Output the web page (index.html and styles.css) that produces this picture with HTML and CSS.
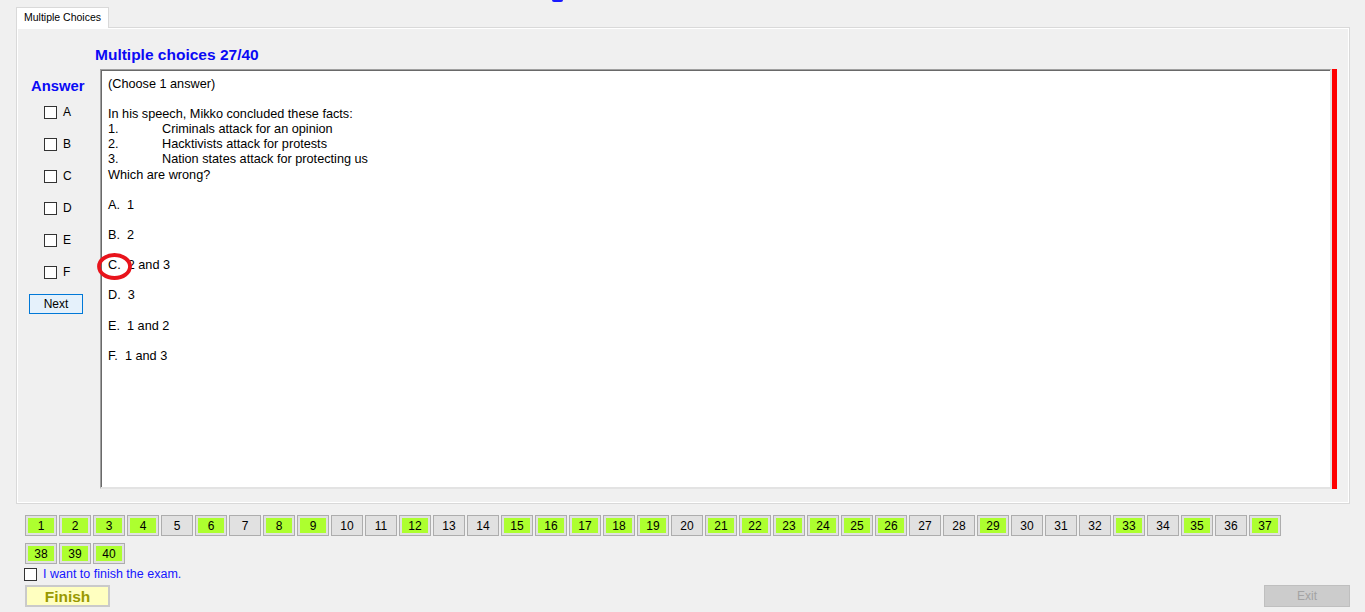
FILE: index.html
```html
<!DOCTYPE html>
<html>
<head>
<meta charset="utf-8">
<link rel="stylesheet" href="styles.css">
</head>
<body>
<div class="top-mark"></div>
<div class="tabs"><div class="tab">Multiple Choices</div></div>
<div class="page">
  <div class="title">Multiple choices 27/40</div>
  <div class="content">
    <div class="answer-col">
      <div class="answer-title">Answer</div>
      <label class="opt"><span class="cb"></span><span>A</span></label>
      <label class="opt"><span class="cb"></span><span>B</span></label>
      <label class="opt"><span class="cb"></span><span>C</span></label>
      <label class="opt"><span class="cb"></span><span>D</span></label>
      <label class="opt"><span class="cb"></span><span>E</span></label>
      <label class="opt"><span class="cb"></span><span>F</span></label>
      <button class="next">Next</button>
    </div>
    <div class="qbox">
      <div class="line">(Choose 1 answer)</div>
      <div class="line">&nbsp;</div>
      <div class="line">In his speech, Mikko concluded these facts:</div>
      <div class="line"><span class="num-tab">1.</span>Criminals attack for an opinion</div>
      <div class="line"><span class="num-tab">2.</span>Hacktivists attack for protests</div>
      <div class="line"><span class="num-tab">3.</span>Nation states attack for protecting us</div>
      <div class="line">Which are wrong?</div>
      <div class="line">&nbsp;</div>
      <div class="line">A.&nbsp; 1</div>
      <div class="line">&nbsp;</div>
      <div class="line">B.&nbsp; 2</div>
      <div class="line">&nbsp;</div>
      <div class="line">C.&nbsp; 2 and 3</div>
      <div class="line">&nbsp;</div>
      <div class="line">D.&nbsp; 3</div>
      <div class="line">&nbsp;</div>
      <div class="line">E.&nbsp; 1 and 2</div>
      <div class="line">&nbsp;</div>
      <div class="line">F.&nbsp; 1 and 3</div>
      <svg class="circle" width="40" height="32" viewBox="0 0 40 32"><ellipse cx="17.5" cy="15.5" rx="15.5" ry="11.5" fill="none" stroke="#e8141c" stroke-width="3.8"/></svg>
    </div>
    <div class="redbar"></div>
  </div>
</div>
<div class="nums">
  <div class="num done"><span>1</span></div>
  <div class="num done"><span>2</span></div>
  <div class="num done"><span>3</span></div>
  <div class="num done"><span>4</span></div>
  <div class="num"><span>5</span></div>
  <div class="num done"><span>6</span></div>
  <div class="num"><span>7</span></div>
  <div class="num done"><span>8</span></div>
  <div class="num done"><span>9</span></div>
  <div class="num"><span>10</span></div>
  <div class="num"><span>11</span></div>
  <div class="num done"><span>12</span></div>
  <div class="num"><span>13</span></div>
  <div class="num"><span>14</span></div>
  <div class="num done"><span>15</span></div>
  <div class="num done"><span>16</span></div>
  <div class="num done"><span>17</span></div>
  <div class="num done"><span>18</span></div>
  <div class="num done"><span>19</span></div>
  <div class="num"><span>20</span></div>
  <div class="num done"><span>21</span></div>
  <div class="num done"><span>22</span></div>
  <div class="num done"><span>23</span></div>
  <div class="num done"><span>24</span></div>
  <div class="num done"><span>25</span></div>
  <div class="num done"><span>26</span></div>
  <div class="num"><span>27</span></div>
  <div class="num"><span>28</span></div>
  <div class="num done"><span>29</span></div>
  <div class="num"><span>30</span></div>
  <div class="num"><span>31</span></div>
  <div class="num"><span>32</span></div>
  <div class="num done"><span>33</span></div>
  <div class="num"><span>34</span></div>
  <div class="num done"><span>35</span></div>
  <div class="num"><span>36</span></div>
  <div class="num done"><span>37</span></div>
  <div class="num done"><span>38</span></div>
  <div class="num done"><span>39</span></div>
  <div class="num done"><span>40</span></div>
</div>
<label class="finish-check"><span class="cb"></span><span>I want to finish the exam.</span></label>
<div class="bottom">
  <button class="finish">Finish</button>
  <button class="exit">Exit</button>
</div>
</body>
</html>
```
FILE: styles.css
```css
* { box-sizing: border-box; }
html, body { margin: 0; padding: 0; }
body {
  background: #f0f0f0;
  font-family: "Liberation Sans", Arial, sans-serif;
  color: #000;
  width: 1365px;
  height: 612px;
  overflow: hidden;
  position: relative;
}
.top-mark {
  position: absolute;
  left: 552px;
  top: 0;
  width: 11px;
  height: 2px;
  background: #1a1aff;
  border-radius: 0 0 4px 4px;
}
.tabs {
  padding: 7px 0 0 16px;
  height: 27px;
  display: flex;
}
.tab {
  width: 93px;
  height: 21px;
  background: #fff;
  border: 1px solid #d9d9d9;
  border-bottom: none;
  font-size: 10.5px;
  line-height: 19px;
  padding-left: 7px;
  color: #000;
  position: relative;
  z-index: 1;
}
.page {
  margin-left: 16px;
  width: 1334px;
  height: 477px;
  border: 1px solid #d9d9d9;
  box-shadow: inset 1px 1px 0 #fff, inset -1px -1px 0 #fff;
  background: #f0f0f0;
}
.title {
  margin: 18px 0 0 78px;
  font-size: 15.5px;
  font-weight: bold;
  line-height: 18px;
  height: 18px;
  color: #0a0af5;
}
.content {
  display: flex;
  margin-top: 5px;
}
.answer-col {
  width: 83px;
  display: flex;
  flex-direction: column;
}
.answer-title {
  margin: 8px 0 1px 14px;
  font-size: 14.8px;
  font-weight: bold;
  line-height: 18px;
  color: #0a0af5;
}
.opt {
  height: 32px;
  display: flex;
  align-items: center;
  padding-left: 27px;
  font-size: 12px;
  gap: 6px;
}
.cb {
  display: inline-block;
  width: 13px;
  height: 13px;
  border: 1px solid #333;
  background: #fff;
}
.next {
  margin: 6px 0 0 12px;
  width: 54px;
  height: 20px;
  border: 1px solid #0078d7;
  background: #e5f1fb;
  font-family: "Liberation Sans", Arial, sans-serif;
  font-size: 12px;
  padding: 0;
  color: #000;
}
.qbox {
  position: relative;
  width: 1232px;
  height: 420px;
  background: #fff;
  border-top: 1px solid #a0a0a0;
  border-left: 1px solid #a0a0a0;
  border-right: 2px solid #e3e3e3;
  border-bottom: 2px solid #e3e3e3;
  box-shadow: inset 1px 1px 0 #696969;
  padding: 7px 0 0 7px;
  font-size: 12.7px;
  line-height: 15.1px;
}
.line { white-space: nowrap; height: 15.1px; }
.num-tab { display: inline-block; width: 54px; }
.circle {
  position: absolute;
  left: -4px;
  top: 181px;
}
.redbar {
  width: 5px;
  height: 420px;
  background: #ff0000;
}
.nums {
  margin: 11px 0 0 25px;
  width: 1270px;
  display: flex;
  flex-wrap: wrap;
  gap: 7px 2px;
}
.num {
  width: 32px;
  height: 21px;
  border: 1px solid #adadad;
  background: #e1e1e1;
  padding: 2px;
  font-size: 12px;
}
.num span {
  display: flex;
  width: 100%;
  height: 100%;
  align-items: center;
  justify-content: center;
}
.num.done span { background: #adff2f; }
.finish-check {
  margin: 2px 0 0 24px;
  display: flex;
  align-items: center;
  gap: 6px;
  height: 16px;
  font-size: 12.5px;
  color: #1515ff;
}
.finish-check .cb { border-color: #333; }
.bottom {
  margin: 3px 0 0 25px;
  width: 1325px;
  display: flex;
  justify-content: space-between;
}
.finish {
  width: 85px;
  height: 22px;
  border: 2px solid #cacaca;
  background: #ffffc0;
  color: #999900;
  font-weight: bold;
  font-size: 15.5px;
  line-height: 18px;
  font-family: "Liberation Sans", Arial, sans-serif;
  padding: 1px 0 0;
}
.exit {
  width: 86px;
  height: 22px;
  border: 1px solid #bfbfbf;
  background: #cccccc;
  color: #a3a3a3;
  font-size: 12px;
  font-family: "Liberation Sans", Arial, sans-serif;
  padding: 0;
}
```
